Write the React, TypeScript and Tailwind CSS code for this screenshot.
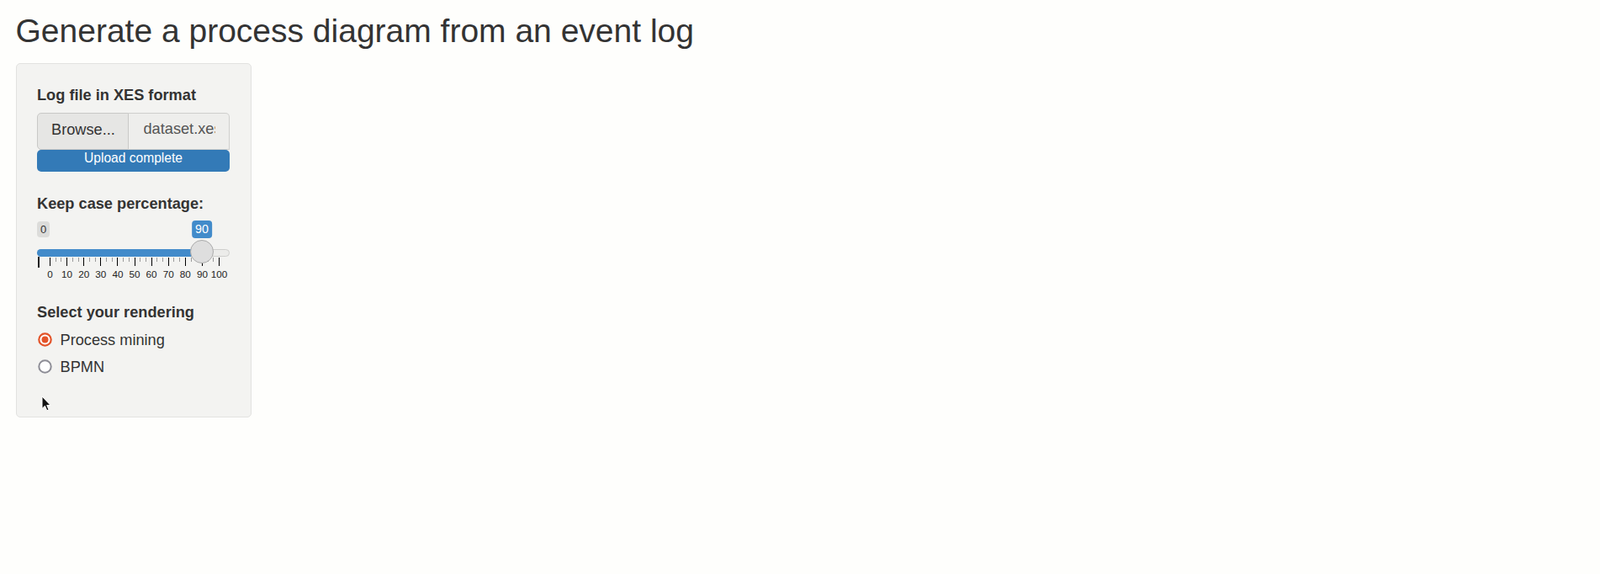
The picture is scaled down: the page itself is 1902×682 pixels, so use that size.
import React from "react";

const ticks = [0, 10, 20, 30, 40, 50, 60, 70, 80, 90, 100];

// slider geometry (px, relative to the slider box)
const GRID_LEFT = 15;
const STEP = 2.01;

const RadioDot: React.FC<{ checked?: boolean }> = ({ checked }) => (
  <svg width="17" height="17" viewBox="0 0 17 17" className="shrink-0">
    {checked ? (
      <>
        <circle cx="8.5" cy="8.5" r="7.2" fill="#ffffff" stroke="#e3542a" strokeWidth="2.2" />
        <circle cx="8.5" cy="8.5" r="4" fill="#e3542a" />
      </>
    ) : (
      <circle cx="8.5" cy="8.5" r="7.2" fill="#ffffff" stroke="#8d8d96" strokeWidth="2" />
    )}
  </svg>
);

const Slider: React.FC<{ value: number }> = ({ value }) => {
  const center = GRID_LEFT + value * STEP;
  return (
    <div className="relative h-[84px] w-[229px]">
      {/* min label */}
      <span className="absolute left-0 top-[8px] rounded-[4px] bg-[#dcdcda] px-[3.9px] py-[1.3px] text-[13px] leading-[17.3px] text-[#333]">
        0
      </span>
      {/* value label */}
      <span
        className="absolute top-[7.3px] -translate-x-1/2 rounded-[4px] bg-[#428bca] px-[3.9px] py-[1.3px] text-[14.3px] leading-[19px] text-white"
        style={{ left: center }}
      >
        {value}
      </span>
      {/* track */}
      <div className="absolute left-0 top-[41px] h-[9.5px] w-[229px] rounded-full border border-[#cfcfcd] bg-[#ececea]" />
      <div
        className="absolute left-0 top-[41px] h-[9.5px] rounded-l-full bg-[#428bca]"
        style={{ width: center }}
      />
      {/* grid */}
      <div className="absolute left-[1px] top-[50.3px] h-[13px] w-[2px] bg-[#222]" />
      {ticks.map((t, i) => {
        const x = GRID_LEFT + t * STEP;
        return (
          <React.Fragment key={t}>
            {i > 0 && (
              <>
                <div className="absolute top-[51.3px] h-[5px] w-px bg-[#9a9a9a]" style={{ left: x - 20.1 / 3 }} />
                <div className="absolute top-[51.3px] h-[5px] w-px bg-[#9a9a9a]" style={{ left: x - (20.1 * 2) / 3 }} />
              </>
            )}
            <div className="absolute top-[51.3px] h-[10px] w-px bg-black" style={{ left: x }} />
            <span
              className="absolute top-[65.4px] -translate-x-1/2 text-[11.7px] leading-[11.7px] text-[#222]"
              style={{ left: x + 0.5 }}
            >
              {t}
            </span>
          </React.Fragment>
        );
      })}
      {/* handle */}
      <div
        className="absolute top-[30.3px] h-[28px] w-[28px] rounded-full border border-[#ababab] bg-[#dedede]"
        style={{ left: center - 14 }}
      />
    </div>
  );
};

const App: React.FC = () => {
  return (
    <div className="h-[682px] w-full bg-[#fefefc] pl-[19px] pt-[15px] font-['Liberation_Sans',Arial,sans-serif] text-[#333]">
      <h1 className="mb-[17px] -ml-[0.5px] text-[39px] font-normal leading-[43px]">
        Generate a process diagram from an event log
      </h1>

      <div className="relative w-[280px] rounded-[5px] border border-[#e2e2e0] bg-[#f3f3f1] pb-[46px] pl-[24px] pr-[25px] pt-[24px]">
        {/* file input */}
        <label className="mb-[8px] block text-[18.2px] font-bold leading-[26px]">Log file in XES format</label>
        <div className="flex h-[44px] w-[229px]">
          <div className="h-[44px] w-[109px] shrink-0 rounded-l-[5px] border border-[#c9c9c7] bg-[#e6e6e4] pl-[16px] pt-[6px] text-[18.2px] leading-[26px] text-[#333]">
            Browse...
          </div>
          <input
            readOnly
            value="dataset.xes"
            className="h-[44px] min-w-0 flex-1 rounded-tr-[5px] border border-l-0 border-[#cfcfcd] bg-[#eeeeec] pl-[17.5px] pr-[16px] pb-[5px] text-[18.2px] text-[#555] outline-none"
          />
        </div>
        <div className="h-[25.6px] w-[229px] rounded-[5px] bg-[#337ab7] pt-[1px] text-center text-[15.6px] leading-[18px] text-white">
          Upload complete
        </div>

        {/* slider */}
        <label className="mt-[25px] block text-[18.2px] font-bold leading-[26px]">Keep case percentage:</label>
        <Slider value={90} />

        {/* radios */}
        <label className="mt-[19px] block text-[18.2px] font-bold leading-[26px]">Select your rendering</label>
        <div className="mt-[7px] flex h-[26px] items-center gap-[10px] pl-[0.5px]">
          <RadioDot checked />
          <span className="text-[18.2px] leading-[26px]">Process mining</span>
        </div>
        <div className="mt-[6.3px] flex h-[26px] items-center gap-[10px] pl-[0.5px]">
          <RadioDot />
          <span className="text-[18.2px] leading-[26px]">BPMN</span>
        </div>

        {/* mouse pointer */}
        <svg
          width="13"
          height="20"
          viewBox="0 0 13 20"
          className="absolute left-[28.5px] top-[393.5px]"
        >
          <path d="M1 1 L1 15.5 L4.4 12.3 L6.8 17.8 L9 16.8 L6.7 11.5 L11 11.5 Z" fill="#111" stroke="#fff" strokeWidth="1" strokeLinejoin="round" />
        </svg>
      </div>
    </div>
  );
};

export default App;
